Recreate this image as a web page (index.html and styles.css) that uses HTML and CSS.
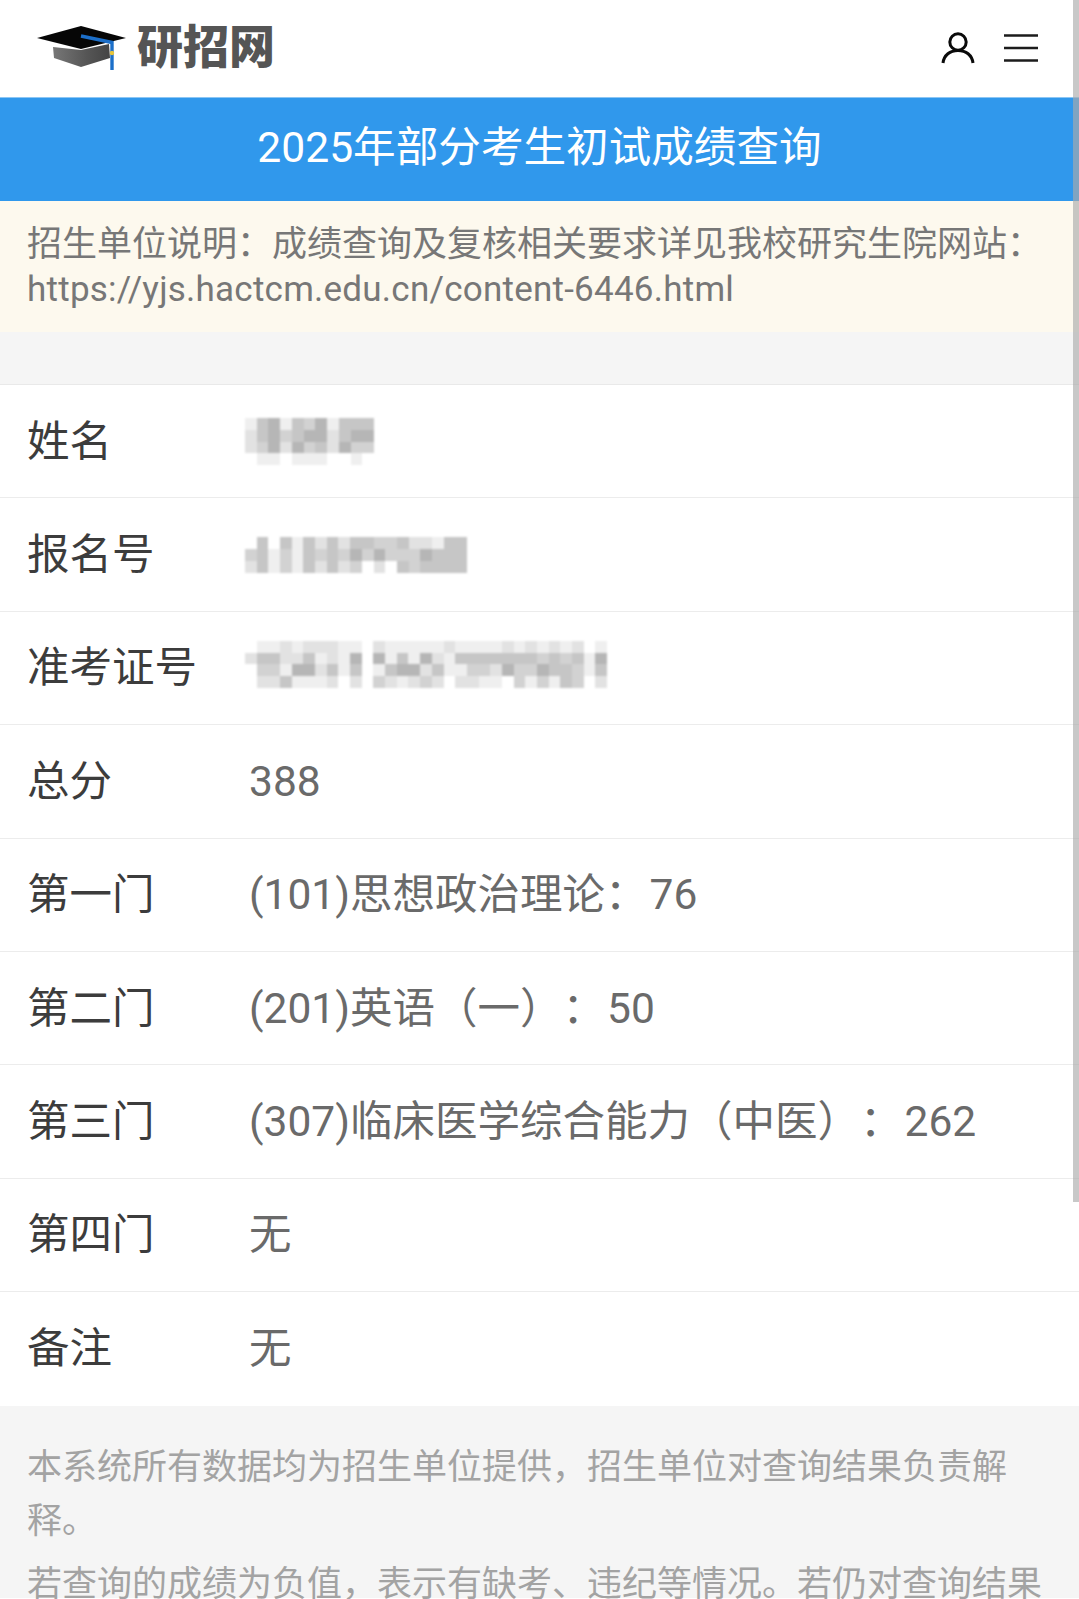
FILE: index.html
```html
<!DOCTYPE html>
<html lang="zh-CN">
<head>
<meta charset="utf-8">
<title>2025年部分考生初试成绩查询</title>
<link rel="stylesheet" href="styles.css">
</head>
<body>
<div class="page">
  <header class="topbar">
    <div class="logo">
      <svg class="logo-hat" viewBox="0 0 92 50" width="92" height="50" aria-hidden="true">
        <defs><linearGradient id="hatbase" x1="0" x2="1" y1="0" y2="0"><stop offset="0" stop-color="#777"/><stop offset="0.6" stop-color="#555"/><stop offset="1" stop-color="#444"/></linearGradient></defs>
        <path d="M16 21 17 32 44 41 73 32 72 18 44 24Z" fill="url(#hatbase)"/>
        <path d="M0 12 44 0 89 12 44 23Z" fill="#060606"/>
        <path d="M44 10 75 16.500V44" fill="none" stroke="#1c6fc9" stroke-width="3.400"/>
        <circle cx="75" cy="27" r="2.200" fill="#e8c53a"/>
      </svg>
      <span class="logo-text">研招网</span>
    </div>
    <div class="top-icons">
      <svg viewBox="0 0 34 34" width="34" height="34" class="icon-user" aria-hidden="true">
        <circle cx="17" cy="11" r="8.200" fill="none" stroke="#0a0a0a" stroke-width="3"/>
        <path d="M2 32C3 24 9 19.500 17 19.500S31 24 32 32" fill="none" stroke="#0a0a0a" stroke-width="3"/>
      </svg>
      <svg viewBox="0 0 34 30" width="34" height="30" class="icon-menu" aria-hidden="true">
        <path d="M0 2.500H34M0 15H34M0 27.500H34" stroke="#1c1c1c" stroke-width="2.600"/>
      </svg>
    </div>
  </header>

  <h1 class="banner">2025年部分考生初试成绩查询</h1>

  <div class="notice">招生单位说明：成绩查询及复核相关要求详见我校研究生院网站：<span class="notice-url">https://yjs.hactcm.edu.cn/content-6446.html</span></div>

  <div class="gap"></div>

  <section class="table">
    <div class="row">
      <div class="label">姓名</div>
      <div class="value">
        <svg class="mosaic" viewBox="0 0 11 4" width="129" height="47" shape-rendering="crispEdges" aria-hidden="true">
          <path class="s-a" d="M0 .5h1M3 .5h1M7 .5h1M1 3.500h2M4 3.500h3M9 3.500h1"/>
          <path class="s-b" d="M0 1.500h1M7 1.500h1M0 2.500h1M3 2.500h1M7 2.500h1"/>
          <path class="s-c" d="M5 .5h1M3 1.500h1M1 2.500h1M5 2.500h1M9 2.500h2"/>
          <path class="s-d" d="M1 .5h1M4 .5h1M8 .5h3M1 1.500h1M4 1.500h1M8 1.500h1M6 2.500h1"/>
          <path class="s-e" d="M2 .5h1M6 .5h1M2 1.500h1M5 1.500h2M9 1.500h2M2 2.500h1M4 2.500h1M8 2.500h1"/>
        </svg>
      </div>
    </div>
    <div class="row">
      <div class="label">报名号</div>
      <div class="value">
        <svg class="mosaic" viewBox="0 0 19 3" width="222" height="36" shape-rendering="crispEdges" aria-hidden="true">
          <path class="s-a" d="M4 .5h1M16 .5h1M2 1.500h1M4 1.500h1M2 2.500h1M4 2.500h1"/>
          <path class="s-b" d="M6 .5h1M8 .5h1M14 .5h2M0 2.500h1M6 2.500h1M8 2.500h1M11 2.500h1"/>
          <path class="s-c" d="M11 .5h2M0 1.500h1M3 1.500h1M6 1.500h1M8 1.500h1M10 1.500h1M12 1.500h3M3 2.500h1M9 2.500h1M14 2.500h1"/>
          <path class="s-d" d="M1 .5h1M3 .5h1M5 .5h1M7 .5h1M9 .5h2M13 .5h1M17 .5h2M1 1.500h1M5 1.500h1M7 1.500h1M16 1.500h3M1 2.500h1M5 2.500h1M7 2.500h1M13 2.500h1M15 2.500h4"/>
          <path class="s-e" d="M9 1.500h1M11 1.500h1M15 1.500h1"/>
        </svg>
      </div>
    </div>
    <div class="row">
      <div class="label">准考证号</div>
      <div class="value">
        <svg class="mosaic mosaic-raised" viewBox="0 0 31 4" width="362" height="47" shape-rendering="crispEdges" aria-hidden="true">
          <path class="s-a" d="M1 .5h2M4 .5h1M8 .5h2M12 .5h5M18 .5h4M23 .5h1M25 .5h1M27 .5h1M30 .5h1M6 1.500h1M8 1.500h1M12 1.500h1M14 1.500h1M17 1.500h1M29 1.500h1M3 2.500h1M8 2.500h1M11 2.500h1M17 2.500h2M29 2.500h1M4 3.500h3M13 3.500h1M20 3.500h2M24 3.500h1M26 3.500h1"/>
          <path class="s-b" d="M3 .5h1M5 .5h3M11 .5h1M17 .5h1M22 .5h1M24 .5h1M26 .5h1M28 .5h1M0 1.500h1M3 1.500h2M7 1.500h1M16 1.500h1M6 2.500h1M15 2.500h1M21 2.500h1M1 3.500h2M7 3.500h1M9 3.500h1M12 3.500h1M14 3.500h1M16 3.500h1M18 3.500h2M30 3.500h1"/>
          <path class="s-c" d="M25 1.500h1M27 1.500h1M1 2.500h2M19 2.500h2M23 2.500h2M28 2.500h1M11 3.500h1M15 3.500h1M23 3.500h1M25 3.500h1M28 3.500h1"/>
          <path class="s-d" d="M1 1.500h2M5 1.500h1M13 1.500h1M18 1.500h7M26 1.500h1M28 1.500h1M7 2.500h1M9 2.500h1M12 2.500h1M16 2.500h1M26 2.500h2M30 2.500h1M3 3.500h1M27 3.500h1"/>
          <path class="s-e" d="M9 1.500h1M11 1.500h1M15 1.500h1M30 1.500h1M4 2.500h2M13 2.500h2M22 2.500h1M25 2.500h1"/>
        </svg>
      </div>
    </div>
    <div class="row">
      <div class="label">总分</div>
      <div class="value">388</div>
    </div>
    <div class="row">
      <div class="label">第一门</div>
      <div class="value">(101)思想政治理论： 76</div>
    </div>
    <div class="row">
      <div class="label">第二门</div>
      <div class="value">(201)英语（一）： 50</div>
    </div>
    <div class="row">
      <div class="label">第三门</div>
      <div class="value">(307)临床医学综合能力（中医）： 262</div>
    </div>
    <div class="row">
      <div class="label">第四门</div>
      <div class="value">无</div>
    </div>
    <div class="row">
      <div class="label">备注</div>
      <div class="value">无</div>
    </div>
  </section>

  <footer class="foot">
    <p class="foot-line">本系统所有数据均为招生单位提供，招生单位对查询结果负责解释。</p>
    <p class="foot-line">若查询的成绩为负值，表示有缺考、违纪等情况。若仍对查询结果</p>
  </footer>

  <div class="scrollbar"></div>
</div>
</body>
</html>
```

FILE: styles.css
```css
* {
  box-sizing: border-box;
}

html,
body {
  margin: 0;
  padding: 0;
  height: 1599px;
  overflow: hidden;
  background: #fff;
}

body {
  font-family: Roboto, "Noto Sans CJK SC", sans-serif;
  text-spacing-trim: space-all;
}

.page {
  position: relative;
  width: 1079px;
  height: 1599px;
  overflow: hidden;
}

.topbar {
  height: 97px;
  display: flex;
  align-items: center;
  justify-content: space-between;
  padding: 0 41px 0 37px;
  background: #fff;
}

.logo {
  display: flex;
  align-items: center;
  gap: 8px;
}

.logo-hat {
  display: block;
  margin-top: 4px;
}

.logo-text {
  font-family: "Noto Sans CJK SC", sans-serif;
  font-size: 46px;
  line-height: 50px;
  font-weight: 900;
  color: #555;
  margin-top: -12px;
}

.top-icons {
  display: flex;
  align-items: center;
  gap: 29px;
}

.icon-user,
.icon-menu {
  display: block;
  margin-top: -2px;
}

.banner {
  margin: 0;
  height: 104px;
  padding-bottom: 4px;
  display: flex;
  align-items: center;
  justify-content: center;
  background: #3098ec;
  border-top: 1px solid #8cc6f4;
  color: #fff;
  font-size: 42.600px;
  font-weight: 400;
  line-height: 1;
}

.notice {
  height: 131px;
  padding: 21px 27px 0;
  background: #fdf9ee;
  color: #777;
  font-size: 35px;
  line-height: 45px;
  word-break: break-word;
}

.notice-url {
  letter-spacing: 0.24px;
}

.gap {
  height: 53px;
  background: #f5f5f5;
  border-bottom: 1px solid #e9e9e9;
}

.table {
  background: #fff;
}

.row {
  height: 113.400px;
  display: flex;
  align-items: center;
  padding-left: 27px;
  border-bottom: 1px solid #ececec;
}

.row:last-child {
  border-bottom: 0;
}

.label {
  width: 222px;
  flex: none;
  color: #3c3c3c;
  font-size: 42.500px;
  line-height: 1.2;
}

.value {
  color: #6a6a6a;
  font-size: 42.500px;
  line-height: 1.2;
  white-space: nowrap;
  word-spacing: -8.500px;
}

.mosaic {
  display: block;
  margin-left: -4px;
  fill: none;
  stroke-width: 1;
  filter: blur(1px);
}

.mosaic-raised {
  margin-top: -6px;
}

.s-a {
  stroke: #efefef;
}

.s-b {
  stroke: #e2e2e2;
}

.s-c {
  stroke: #d2d2d2;
}

.s-d {
  stroke: #c6c6c6;
}

.s-e {
  stroke: #b6b6b6;
}

.foot {
  height: 192px;
  padding: 35px 27px 0;
  background: #f5f5f5;
  color: #a3a3a3;
  font-size: 35px;
  line-height: 54px;
}

.foot-line {
  margin: 0 0 9px;
}

.scrollbar {
  position: absolute;
  top: 0;
  right: 0;
  width: 6px;
  height: 1202px;
  background: rgba(170, 170, 170, 0.65);
}
```
